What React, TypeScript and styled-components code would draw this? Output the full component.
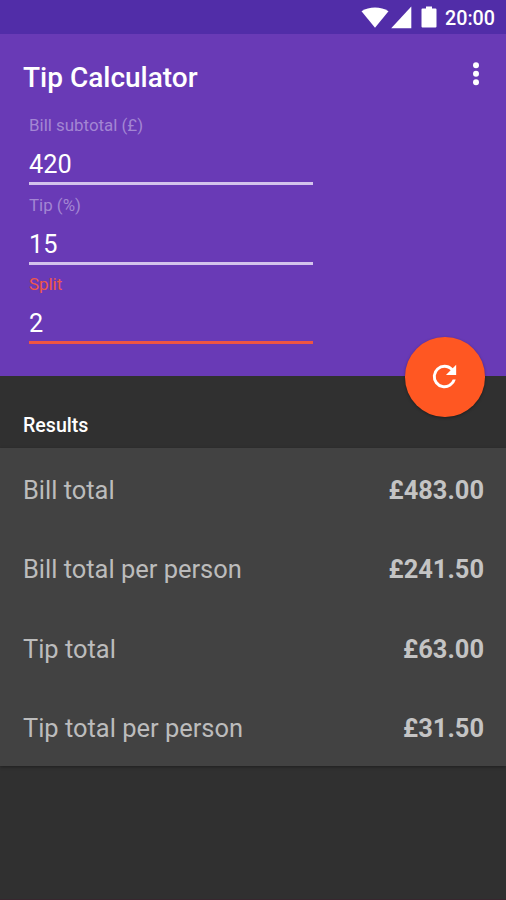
import React, { useState } from "react";
import styled, { createGlobalStyle } from "styled-components";

const GlobalStyle = createGlobalStyle`
  *, *::before, *::after { box-sizing: border-box; }
  body { margin: 0; background: #303030; font-family: Roboto, sans-serif; }
`;

const Screen = styled.div`
  display: flex;
  flex-direction: column;
  width: 506px;
  height: 900px;
  overflow: hidden;
  background: #303030;
  border-bottom: 1px solid #38262e;
`;

const StatusBar = styled.div`
  display: flex;
  align-items: center;
  justify-content: flex-end;
  height: 34px;
  padding: 3px 11px 0 0;
  background: #512da8;
  color: #fff;
`;

const StatusIcons = styled.svg`
  margin: 0 8px 4px 0;
`;

const Clock = styled.span`
  width: 50px;
  font-size: 19.7px;
  font-weight: 500;
  line-height: 24px;
  white-space: nowrap;
`;

const Header = styled.header`
  position: relative;
  height: 342px;
  background: #693ab6;
`;

const AppBar = styled.div`
  display: flex;
  align-items: center;
  justify-content: space-between;
  height: 79px;
  padding: 9px 25px 0 23px;
`;

const Title = styled.h1`
  margin: 0;
  color: #fff;
  font-size: 28px;
  font-weight: 500;
  line-height: 34px;
  white-space: nowrap;
`;

const MenuButton = styled.button`
  display: flex;
  margin: 0 0 9px;
  padding: 0;
  border: 0;
  background: none;
`;

const Form = styled.div`
  display: flex;
  flex-direction: column;
  width: 284px;
  margin-left: 29px;
`;

const Field = styled.label<{ $active?: boolean }>`
  display: flex;
  flex-direction: column;
  height: 79.7px;
  color: ${(p) => (p.$active ? "#ef5748" : "#a386d3")};
`;

const FieldLabel = styled.span`
  font-size: 16.9px;
  line-height: 24px;
`;

const FieldInput = styled.input<{ $active?: boolean }>`
  width: 100%;
  height: 48px;
  padding: 10px 0 0;
  border: 0;
  border-bottom: 3px solid ${(p) => (p.$active ? "#ef5542" : "#d3c3ec")};
  outline: 0;
  background: transparent;
  color: #fff;
  font-family: inherit;
  font-size: 25.3px;
`;

const Fab = styled.button`
  position: absolute;
  right: 21.5px;
  bottom: -40.5px;
  display: flex;
  align-items: center;
  justify-content: center;
  width: 79.5px;
  height: 79.5px;
  padding: 0;
  border: 0;
  border-radius: 50%;
  background: #ff5722;
  box-shadow: 0 1px 3px rgba(0, 0, 0, 0.35);
`;

const ResultsTitle = styled.h2`
  height: 72px;
  margin: 0;
  padding: 38px 23px 0;
  color: #fff;
  font-size: 19.6px;
  font-weight: 500;
  line-height: 24px;
`;

const ResultsCard = styled.div`
  display: grid;
  grid-template-rows: repeat(4, 79.5px);
  background: #424242;
  box-shadow: 0 1px 3px rgba(0, 0, 0, 0.35);
`;

const ResultRow = styled.div`
  display: flex;
  align-items: baseline;
  justify-content: space-between;
  padding: 26.5px 22px 0 23px;
  color: #bcbcbc;
  font-size: 25.45px;
  line-height: 30px;
`;

const Amount = styled.span`
  color: #c4c4c4;
  font-weight: 700;
`;

const fieldDefs = [
  { key: "bill", label: "Bill subtotal (£)" },
  { key: "tip", label: "Tip (%)" },
  { key: "split", label: "Split" },
] as const;

const initialValues = { bill: "420", tip: "15", split: "2" };

export default function App() {
  const [values, setValues] = useState(initialValues);
  const [active, setActive] = useState<string>("split");

  const bill = Number(values.bill) || 0;
  const people = Number(values.split) || 1;
  const tip = (bill * (Number(values.tip) || 0)) / 100;
  const results = [
    { name: "Bill total", amount: bill + tip },
    { name: "Bill total per person", amount: (bill + tip) / people },
    { name: "Tip total", amount: tip },
    { name: "Tip total per person", amount: tip / people },
  ];

  return (
    <Screen>
      <GlobalStyle />
      <StatusBar>
        <StatusIcons width="76" height="24" viewBox="0 0 76 24" fill="#fff">
          <path d="M.5 6.2C4.4 3.500 9 2.400 14 2.400s9.600 1.100 13.500 3.800L14 22.700z" />
          <path d="M50.300 1.500V23.300H30.200z" />
          <path d="M61.500 3.500h3.500V1.500h6v2h3.500a1 1 0 0 1 1 1v17a1 1 0 0 1-1 1h-13a1 1 0 0 1-1-1v-17a1 1 0 0 1 1-1z" />
        </StatusIcons>
        <Clock>20:00</Clock>
      </StatusBar>
      <Header>
        <AppBar>
          <Title>Tip Calculator</Title>
          <MenuButton aria-label="More options">
            <svg width="10" height="26" viewBox="0 0 10 26" fill="#fff">
              <circle cx="5" cy="4.300" r="3" />
              <circle cx="5" cy="12.800" r="3" />
              <circle cx="5" cy="21.300" r="3" />
            </svg>
          </MenuButton>
        </AppBar>
        <Form>
          {fieldDefs.map(({ key, label }) => (
            <Field key={key} $active={active === key}>
              <FieldLabel>{label}</FieldLabel>
              <FieldInput
                $active={active === key}
                value={values[key]}
                onFocus={() => setActive(key)}
                onChange={(e) => setValues({ ...values, [key]: e.target.value })}
              />
            </Field>
          ))}
        </Form>
        <Fab aria-label="Reset" onClick={() => setValues(initialValues)}>
          <svg width="35" height="35" viewBox="0 0 24 24" fill="#fff">
            <path d="M17.650 6.350A7.950 7.950 0 0 0 12 4a8 8 0 1 0 7.730 10h-2.080A6 6 0 1 1 12 6c1.660 0 3.140.69 4.220 1.780L13 11h7V4z" />
          </svg>
        </Fab>
      </Header>
      <ResultsTitle>Results</ResultsTitle>
      <ResultsCard>
        {results.map(({ name, amount }) => (
          <ResultRow key={name}>
            <span>{name}</span>
            <Amount>£{amount.toFixed(2)}</Amount>
          </ResultRow>
        ))}
      </ResultsCard>
    </Screen>
  );
}
